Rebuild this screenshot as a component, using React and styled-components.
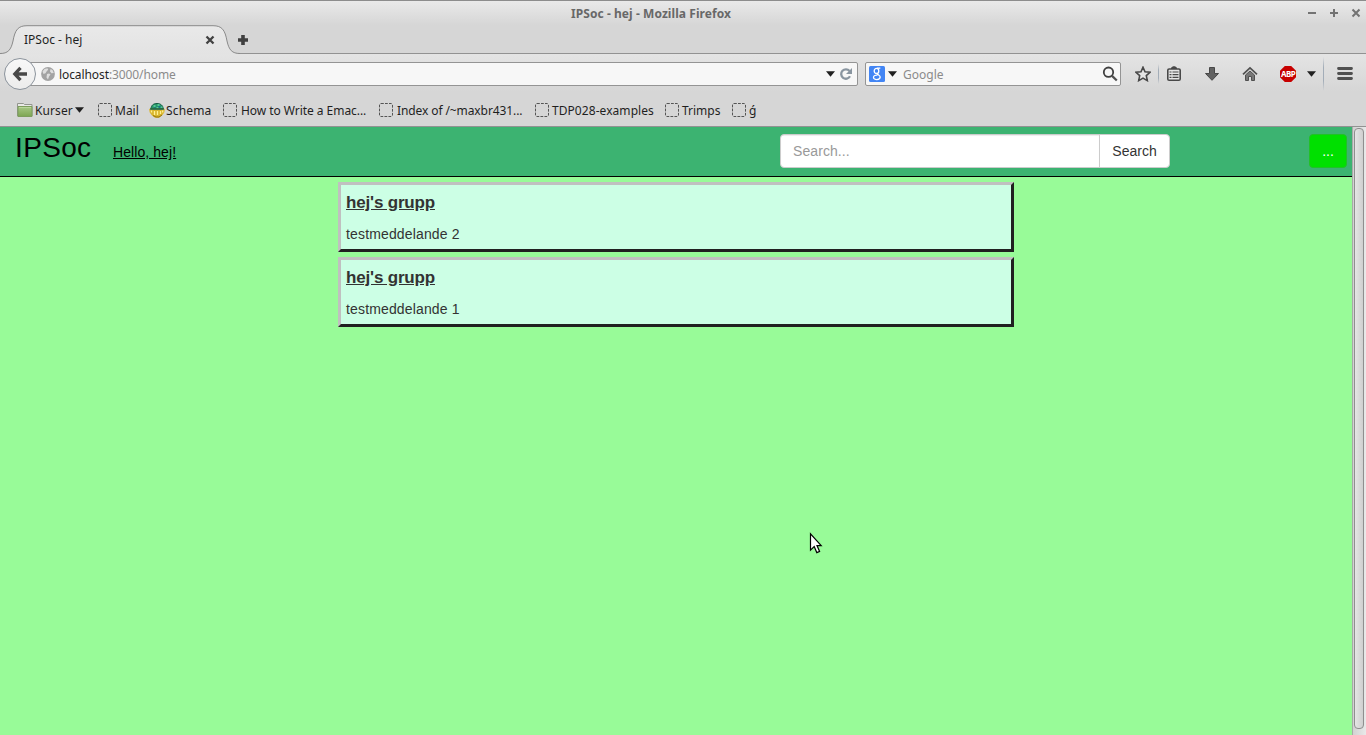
import React from "react";
import styled, { createGlobalStyle } from "styled-components";

const GlobalStyle = createGlobalStyle`
  * { box-sizing: border-box; }
  html, body { margin: 0; padding: 0; overflow: hidden; }
  svg { display: block; flex: none; }
`;

const Window = styled.div`
  display: flex;
  flex-direction: column;
  width: 1366px;
  height: 735px;
  background: #98fb98;
  font-family: "Noto Sans", sans-serif;
  font-size: 12px;
  line-height: 16px;
  color: #1f1f1f;
  white-space: nowrap;
`;

const TopChrome = styled.div`
  flex: none;
  height: 54px;
  border-top: 1px solid #8c8c8c;
  background: linear-gradient(#e9e9e9, #d6d6d6 24px);
`;

const TitleBar = styled.div`
  display: flex;
  height: 24px;
  align-items: center;
  padding: 0 5px 0 0;
`;

const WindowTitle = styled.div`
  flex: 1;
  padding: 1px 5px 0 0;
  text-align: center;
  font-weight: 700;
  letter-spacing: 0.07px;
  color: #686868;
`;

const WindowButtons = styled.div`
  display: flex;
  gap: 12px;
`;

const TabStrip = styled.div`
  display: flex;
  height: 29px;
  position: relative;
  border-bottom: 1px solid #929292;
`;

const Tab = styled.div`
  position: relative;
  display: flex;
  width: 238px;
  height: 29px;
  align-items: center;
  justify-content: space-between;
  padding: 1px 23px 0 24px;
`;

const TabShape = styled.svg`
  position: absolute;
  left: 0;
  top: 0;
`;

const TabContent = styled.span`
  position: relative;
`;

const NewTab = styled.div`
  display: flex;
  align-items: center;
  padding-top: 1px;
`;

const NavBar = styled.div`
  display: flex;
  flex: none;
  height: 41px;
  align-items: center;
  padding: 0 13px 1px 4px;
  background: linear-gradient(#e4e4e4, #d6d6d6 37px);
`;

const BackButton = styled.div`
  position: relative;
  z-index: 1;
  display: flex;
  flex: none;
  width: 32px;
  height: 32px;
  align-items: center;
  justify-content: center;
  border: 1px solid #8b939c;
  border-radius: 50%;
  background: linear-gradient(#f8f8f8, #ececec);
`;

const Field = styled.div`
  display: flex;
  flex: none;
  align-items: center;
  width: ${(p) => p.$width}px;
  height: 24px;
  margin-left: ${(p) => p.$offset}px;
  padding: ${(p) => p.$padding};
  border: 1px solid #949494;
  border-radius: 2px;
  background: #f7f7f7;
`;

const FieldText = styled.span`
  flex: 1;
  color: #8b8b8b;
  padding-top: 2px;
  padding-left: ${(p) => p.$indent}px;
  letter-spacing: ${(p) => p.$tracking || 0}px;

  b { font-weight: 400; color: #1f1f1f; }
`;

const Tools = styled.div`
  display: flex;
  flex: 1;
  height: 40px;
  align-items: center;
  padding-left: 14px;
`;

const Tool = styled.div`
  flex: none;
  margin-right: ${(p) => p.$gap}px;
`;

const ToolRule = styled.div`
  width: 1px;
  height: ${(p) => p.$height}px;
  margin-right: ${(p) => p.$gap}px;
  background: linear-gradient(transparent, #a3adb8 30%, #a3adb8 70%, transparent);
`;

const Bookmarks = styled.div`
  display: flex;
  flex: none;
  height: 32px;
  padding: 0 0 1px 17px;
  border-bottom: 1px solid #929292;
  background: #d6d6d6;
`;

const Bookmark = styled.div`
  display: flex;
  flex: none;
  align-items: center;
  width: ${(p) => p.$width}px;
  gap: ${(p) => p.$gap ?? 3}px;
`;

const BookmarkLabel = styled.span`
  padding-top: 2px;
  letter-spacing: ${(p) => p.$tracking || 0}px;
`;

const Viewport = styled.div`
  display: flex;
  flex: 1;
  min-height: 0;
`;

const Page = styled.main`
  width: 1352px;
  background: #98fb98;
  font: 14px/20px "Liberation Sans", Arial, sans-serif;
  color: #333;
`;

const SiteHeader = styled.header`
  display: flex;
  height: 50px;
  align-items: flex-start;
  padding: 0 5px 0 15px;
  border-bottom: 1px solid #000;
  background: #3cb371;
`;

const Brand = styled.a`
  width: 98px;
  font-size: 28px;
  line-height: 42px;
  letter-spacing: 0.35px;
  color: #000;
`;

const Greeting = styled.a`
  width: 667px;
  padding-top: 15px;
  color: #000;
  letter-spacing: 0.08px;
  text-decoration: underline;
`;

const SearchGroup = styled.div`
  display: flex;
  width: 390px;
  height: 34px;
  margin-top: 7px;
  overflow: hidden;
  border: 1px solid #ccc;
  border-radius: 4px;
  background: #fff;
`;

const SearchInput = styled.div`
  flex: 1;
  padding: 6px 12px;
  color: #999;
  letter-spacing: 0.08px;
  box-shadow: inset 0 1px 1px rgba(0, 0, 0, 0.075);
`;

const SearchButton = styled.div`
  width: 70px;
  padding: 6px 0;
  border-left: 1px solid #ccc;
  text-align: center;
`;

const MenuButton = styled.div`
  width: 38px;
  height: 34px;
  margin: 7px 0 0 auto;
  padding: 6px 0;
  border: 1px solid #21c127;
  border-radius: 4px;
  background: #00e000;
  color: #fff;
  text-align: center;
`;

const Feed = styled.section`
  display: flex;
  flex-direction: column;
  gap: 5px;
  width: 676px;
  margin: 5px auto 0;
`;

const Post = styled.article`
  height: 70px;
  padding: 8px 5px 6px;
  border: 3px solid;
  border-color: #c0c0c0 #202020 #202020 #c0c0c0;
  background: #ccffe5;
`;

const PostGroup = styled.h2`
  margin: 0 0 11px;
  font-size: 17px;
  line-height: 20px;
  letter-spacing: -0.18px;
  text-decoration: underline;
`;

const PostText = styled.p`
  margin: 0;
  letter-spacing: 0.15px;
`;

const Scrollbar = styled.div`
  width: 14px;
  padding: 1px 1px 6px;
  border-left: 1px solid #a9a9a9;
  background: linear-gradient(90deg, #d2d2d2, #e9e9e9);
`;

const ScrollThumb = styled.div`
  width: 10px;
  height: 601px;
  border: 1px solid #8f8f8f;
  border-radius: 4px;
  background: linear-gradient(90deg, #e5e5e5, #cfcfcf);
`;

const Pointer = styled.svg`
  position: absolute;
  left: 809px;
  top: 532px;
`;

const Badge = styled.div`
  display: flex;
  width: 16px;
  height: 16px;
  align-items: center;
  justify-content: center;
  background: #c70000;
  clip-path: polygon(30% 0, 70% 0, 100% 30%, 100% 70%, 70% 100%, 30% 100%, 0 70%, 0 30%);
  color: #fff;
  font: 700 8px/10px "Noto Sans", sans-serif;
  letter-spacing: -0.6px;
`;

const Caret = () => (
  <svg width="9" height="6" viewBox="0 0 9 6"><path d="M0 .3h9L4.500 5.800z" fill="#202020" /></svg>
);

const Placeholder = () => (
  <svg width="15" height="14" viewBox="0 0 15 14">
    <rect x=".5" y=".5" width="13" height="13" rx="1.500" fill="none" stroke="#555" strokeDasharray="2.800 1.200" />
  </svg>
);

const FolderIcon = () => (
  <svg width="16" height="14" viewBox="0 0 16 14">
    <path d="M.5 13V.5h6l1 1h7.500V13z" fill="#e9e9e6" stroke="#92958e" />
    <path d="M1 3.500h14v10H1z" fill="url(#folder)" stroke="#7d9d5c" />
    <path d="M2 4.500h12" stroke="#b9d59b" />
    <defs><linearGradient id="folder" x2="0" y2="1"><stop stopColor="#a8c986" /><stop offset="1" stopColor="#7da552" /></linearGradient></defs>
  </svg>
);

const SchemaIcon = () => (
  <svg width="16" height="16" viewBox="0 0 16 16">
    <path d="M2 7C2 3.300 4.500 1.500 8 1.500S14.200 3.500 14.200 7z" fill="#279568" stroke="#155b43" />
    <path d="M4.500 3h2v2h-2zM8.500 2h2v2h-2zM7.500 5h2v1.500h-2zM11.500 4.500h2v1.500h-2z" fill="#55c795" />
    <path d="M9.500 4h2v1.500h-2zM5 5.500h2v1H5z" fill="#176b91" />
    <path d="M0 6.500l2 1.500h12l2-1.500-.7 4-2.300 3-3 2.200H6l-3-2.200L.7 10.500z" fill="#d9b52c" />
    <path d="M1 7h14" stroke="#2d6a3a" strokeWidth="1.500" />
    <path d="M2.500 8.500v2M5.500 9v4M8.500 9v4M11.500 9v3M13.700 8.500v2" stroke="#fff094" strokeWidth="1.300" />
    <path d="M4 13.500l3 1.500h3l3-2" fill="none" stroke="#94740c" />
  </svg>
);

const posts = [
  { group: "hej's grupp", text: "testmeddelande 2" },
  { group: "hej's grupp", text: "testmeddelande 1" },
];

const bookmarks = [
  { label: "How to Write a Emac...", width: 156, tracking: -0.05 },
  { label: "Index of /~maxbr431...", width: 156, tracking: -0.1 },
  { label: "TDP028-examples", width: 130, gap: 2, tracking: 0.06 },
  { label: "Trimps", width: 67, gap: 2 },
  { label: "ǵ", width: 40, gap: 2 },
];

export default function App() {
  return (
    <Window>
      <GlobalStyle />
      <TopChrome>
        <TitleBar>
          <WindowTitle>IPSoc - hej - Mozilla Firefox</WindowTitle>
          <WindowButtons>
            <svg width="10" height="10" viewBox="0 0 10 10"><path d="M1 5h8" stroke="#737373" strokeWidth="2" /></svg>
            <svg width="10" height="10" viewBox="0 0 10 10"><path d="M1 5h8M5 1v8" stroke="#737373" strokeWidth="2" /></svg>
            <svg width="10" height="10" viewBox="0 0 10 10"><path d="M1.500 1.500l7 7M8.500 1.500l-7 7" stroke="#737373" strokeWidth="2" /></svg>
          </WindowButtons>
        </TitleBar>
        <TabStrip>
          <Tab>
            <TabShape width="240" height="29" viewBox="0 0 240 29">
              <defs><linearGradient id="tab" x2="0" y2="1"><stop stopColor="#e9e9e9" /><stop offset="1" stopColor="#e3e3e3" /></linearGradient></defs>
              <path d="M0 28.500C8 28.500 11 25 13 16C15 5 18 .7 27 .7H213C222 .7 225 5 227 16C229 25 232 28.500 240 28.500V29H0z" fill="url(#tab)" />
              <path d="M0 28.500C8 28.500 11 25 13 16C15 5 18 .7 27 .7H213C222 .7 225 5 227 16C229 25 232 28.500 240 28.500" fill="none" stroke="#8a8a8a" />
            </TabShape>
            <TabContent>IPSoc - hej</TabContent>
            <TabContent>
              <svg width="10" height="10" viewBox="0 0 10 10"><path d="M1.500 1.500l7 7M8.500 1.500l-7 7" stroke="#414141" strokeWidth="2.300" /></svg>
            </TabContent>
          </Tab>
          <NewTab>
            <svg width="10" height="10" viewBox="0 0 10 10"><path d="M0 5h10M5 0v10" stroke="#404040" strokeWidth="3.600" /></svg>
          </NewTab>
        </TabStrip>
      </TopChrome>

      <NavBar>
        <BackButton>
          <svg width="16" height="16" viewBox="0 0 16 16"><path d="M8.500 1.800L2.800 8l5.700 6.200M3 8h12" fill="none" stroke="#484848" strokeWidth="3.300" /></svg>
        </BackButton>
        <Field $width={831} $offset={-9} $padding="0 4px 0 13px">
          <svg width="14" height="14" viewBox="0 0 14 14">
            <circle cx="7" cy="7" r="6.900" fill="#a3a3a3" />
            <path d="M1.500 4.500l2-2.500 3-.8.7 1.500-1.500 1.500-1.200 2L2.500 7zM6 7l2-.5 1.500 1L8 9.500l-1 3-1.500-2zM9.500 2l2 1 1.300 3-2.300.3L9 4.500z" fill="#dedede" />
          </svg>
          <FieldText $indent={4} $tracking={-0.09}><b>localhost</b>:3000/home</FieldText>
          <Caret />
          <Tool $gap={0}>
            <svg width="18" height="14" viewBox="0 0 18 14">
              <path d="M15 9.300A4.700 4.700 0 1 1 14.500 4" fill="none" stroke="#8995a0" strokeWidth="2.300" />
              <path d="M17 1v6h-6z" fill="#8995a0" />
            </svg>
          </Tool>
        </Field>
        <Field $width={256} $offset={7} $padding="0 2px 0 3px">
          <svg width="16" height="16" viewBox="0 0 16 16">
            <rect width="16" height="16" rx="1.500" fill="#4285f4" />
            <g fill="none" stroke="#fff" strokeWidth="1.300">
              <ellipse cx="7.500" cy="4.900" rx="2.300" ry="2.600" />
              <path d="M8 2.200h3.300M8.500 7.300c-1 1 2.700 1.700 2.700 3.700 0 3.300-6.700 3.300-6.700.4 0-1.800 2-2.500 4-2.300" />
            </g>
          </svg>
          <Tool $gap={-1}>
            <svg width="13" height="6" viewBox="0 0 13 6"><path d="M3 .3h9L7.500 5.800z" fill="#202020" /></svg>
          </Tool>
          <FieldText $indent={6}>Google</FieldText>
          <svg width="16" height="16" viewBox="0 0 16 16">
            <circle cx="6.500" cy="6.200" r="4.700" fill="none" stroke="#3f3f3f" strokeWidth="1.800" />
            <path d="M9.800 9.700l5 4.800" stroke="#505050" strokeWidth="2.300" />
          </svg>
        </Field>
        <Tools>
          <Tool $gap={7}>
            <svg width="16" height="16" viewBox="0 0 16 16"><path d="M8 1.200l2 4.500 5 .6-3.700 3.300 1 5L8 12.100l-4.300 2.500 1-5L1 6.300l5-.6z" fill="#e5e5e5" stroke="#484848" strokeWidth="1.600" /></svg>
          </Tool>
          <ToolRule $height={20} $gap={8} />
          <Tool $gap={24}>
            <svg width="14" height="16" viewBox="0 0 14 16">
              <path d="M4 3V1.700L6 .3h2l2 1.400V3" fill="#484848" />
              <rect x=".8" y="3" width="12.400" height="11.300" rx="1.300" fill="#e5e5e5" stroke="#484848" strokeWidth="1.600" />
              <path d="M2.500 6h2M5.500 6h6M2.500 8.700h2M5.500 8.700h6M2.500 11.400h2M5.500 11.400h6" stroke="#484848" strokeWidth="1.200" />
            </svg>
          </Tool>
          <Tool $gap={23}>
            <svg width="14" height="16" viewBox="0 0 14 16"><path d="M4.500 1.500h5v6h4L7 14.300.5 7.500h4z" fill="#626262" stroke="#484848" /></svg>
          </Tool>
          <Tool $gap={22}>
            <svg width="16" height="16" viewBox="0 0 16 16">
              <path d="M1 8.300L8 1.800l7 6.500" fill="none" stroke="#505050" strokeWidth="1.700" />
              <path d="M3.500 9L8 5l4.500 4v5.500h-3v-4h-3v4h-3z" fill="#777" stroke="#505050" />
            </svg>
          </Tool>
          <Tool $gap={11}><Badge>ABP</Badge></Tool>
          <Tool $gap={7}><Caret /></Tool>
          <ToolRule $height={34} $gap={13} />
          <svg width="16" height="14" viewBox="0 0 16 14"><path d="M1.500 1.500h13M1.500 6.500h13M1.500 11.500h13" stroke="#505050" strokeWidth="2.800" strokeLinecap="round" /></svg>
        </Tools>
      </NavBar>

      <Bookmarks>
        <Bookmark $width={81} $gap={2}><FolderIcon /><BookmarkLabel $tracking={0.1}>Kurser</BookmarkLabel><Caret /></Bookmark>
        <Bookmark $width={51} $gap={2}><Placeholder /><BookmarkLabel>Mail</BookmarkLabel></Bookmark>
        <Bookmark $width={74} $gap={1}><SchemaIcon /><BookmarkLabel $tracking={0.15}>Schema</BookmarkLabel></Bookmark>
        {bookmarks.map((item) => (
          <Bookmark key={item.label} $width={item.width} $gap={item.gap}>
            <Placeholder /><BookmarkLabel $tracking={item.tracking}>{item.label}</BookmarkLabel>
          </Bookmark>
        ))}
      </Bookmarks>

      <Viewport>
        <Page>
          <SiteHeader>
            <Brand>IPSoc</Brand>
            <Greeting>Hello, hej!</Greeting>
            <SearchGroup>
              <SearchInput>Search...</SearchInput>
              <SearchButton>Search</SearchButton>
            </SearchGroup>
            <MenuButton>...</MenuButton>
          </SiteHeader>
          <Feed>
            {posts.map((post) => (
              <Post key={post.text}>
                <PostGroup>{post.group}</PostGroup>
                <PostText>{post.text}</PostText>
              </Post>
            ))}
          </Feed>
        </Page>
        <Scrollbar><ScrollThumb /></Scrollbar>
      </Viewport>

      <Pointer width="15" height="22" viewBox="0 0 15 22">
        <path d="M1.500 1.800v16.300l3.700-3.500 2.600 6 2.800-1.200L8 13.600h4.200z" fill="#fff" stroke="#000" strokeWidth="1.200" />
      </Pointer>
    </Window>
  );
}
